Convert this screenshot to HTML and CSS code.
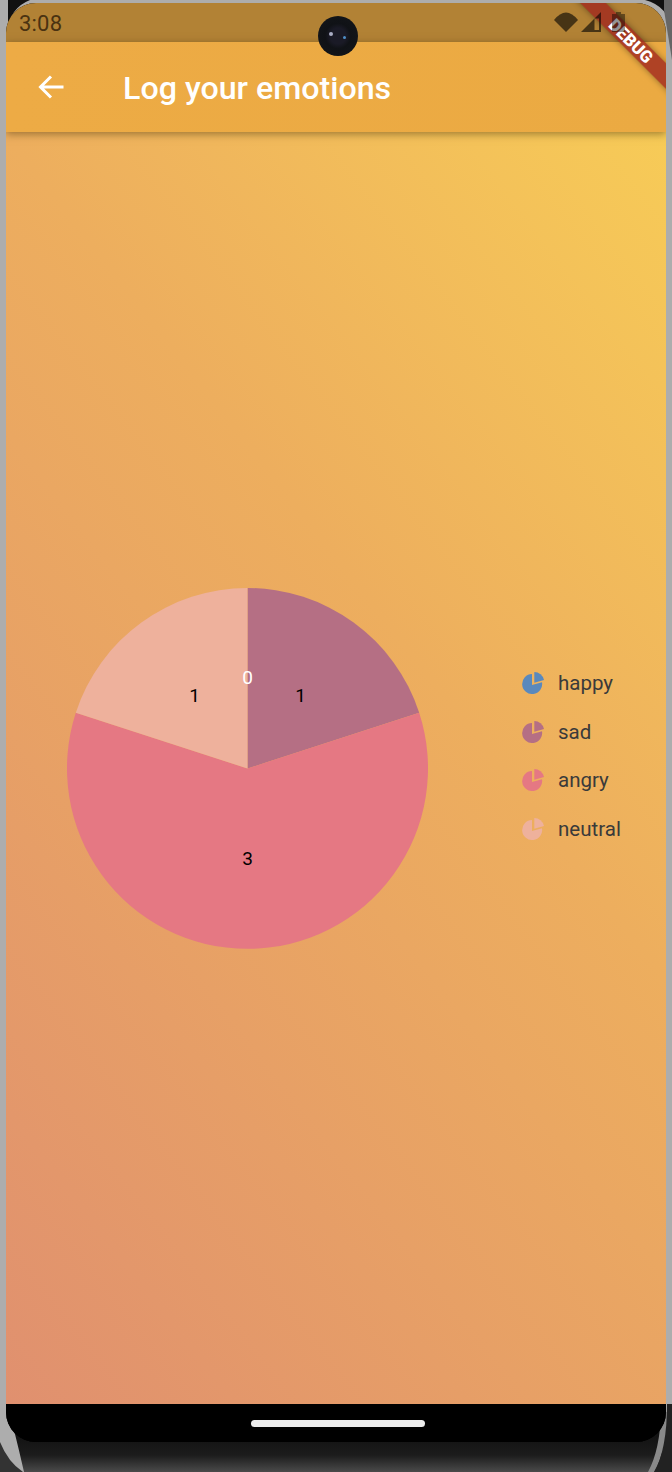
FILE: index.html
```html
<!DOCTYPE html>
<html lang="en">
<head>
    <meta charset="UTF-8">
    <meta name="viewport" content="width=device-width, initial-scale=1.0">
    <title>Log your emotions</title>
    <link rel="stylesheet" href="styles.css">
</head>
<body>
    <div class="device">
        <!-- Phone body behind the screen -->
        <svg class="frame" width="672" height="1472" viewBox="0 0 672 1472">
            <defs>
                <linearGradient id="chin" x1="0" y1="0" x2="0" y2="1">
                    <stop offset="0" stop-color="#0f0f0f"/>
                    <stop offset="0.6" stop-color="#1c1c1c"/>
                    <stop offset="1" stop-color="#4a4a4a"/>
                </linearGradient>
            </defs>
            <rect width="672" height="1472" fill="#adadad"/>
            <path d="M8 30Q10 8 30 0H645Q668 6 672 30V0H8Z" fill="#111"/>
            <path d="M664 0H672V60L664 10Z" fill="#666"/>
            <path d="M14 1430H662V1472H24Q19 1450 14 1430Z" fill="url(#chin)"/>
            <path d="M0 1442Q8 1462 23 1472H0Z" fill="#333"/>
            <path d="M661 1412H667Q667 1450 654 1472H648Q660 1450 661 1412Z" fill="#8a8a8a"/>
            <path d="M667 1404H672V1472H654Q667 1450 667 1404Z" fill="#222"/>
        </svg>

        <div class="screen">
            <div class="status-bar">
                <span class="clock">3:08</span>
                <div class="status-icons">
                    <svg width="24" height="20" viewBox="0 0 24 20"><path class="status-glyph" d="M0 8Q12 -7 24 8L12 20Z"/></svg>
                    <svg width="20" height="20" viewBox="0 0 20 20"><path class="status-glyph" fill-rule="evenodd" d="M20 0V20H0ZM13.500 6.500V18H18V6.500Z"/></svg>
                    <svg class="battery" width="13" height="20" viewBox="0 0 13 20"><path class="status-glyph" d="M4 0H9V2H13V20H0V2H4Z"/></svg>
                </div>
            </div>
            <header class="app-bar">
                <svg class="back" width="26" height="26" viewBox="0 0 26 26">
                    <path d="M25.500 13H3M13 2.500L2.500 13L13 23.500" fill="none" stroke="#fff" stroke-width="3"/>
                </svg>
                <h1>Log your emotions</h1>
            </header>

            <main class="content">
                <svg class="pie" width="361" height="361" viewBox="0 0 361 361">
                    <path d="M180.500 180.500V0A180.500 180.500 0 0 1 352.200 124.700Z" fill="#b56f84"/>
                    <path d="M180.500 180.500L352.200 124.700A180.500 180.500 0 1 1 8.800 124.700Z" fill="#e57883"/>
                    <path d="M180.500 180.500L8.800 124.700A180.500 180.500 0 0 1 180.500 0Z" fill="#eeb19c"/>
                    <text class="pie-label" x="233.500" y="113.500">1</text>
                    <text class="pie-label" x="180.500" y="277">3</text>
                    <text class="pie-label" x="127.500" y="113.500">1</text>
                    <text class="pie-label zero" x="180.500" y="96">0</text>
                </svg>

                <ul class="legend">
                    <li>
                        <svg class="legend-icon happy" viewBox="0 0 22 22"><path d="M10 2V13L20 10.200A10 10 0 1 1 10 2Z"/><path d="M12.300 0A10 10 0 0 1 22 8L12.300 10.800Z"/></svg>
                        happy
                    </li>
                    <li>
                        <svg class="legend-icon sad" viewBox="0 0 22 22"><path d="M10 2V13L20 10.200A10 10 0 1 1 10 2Z"/><path d="M12.300 0A10 10 0 0 1 22 8L12.300 10.800Z"/></svg>
                        sad
                    </li>
                    <li>
                        <svg class="legend-icon angry" viewBox="0 0 22 22"><path d="M10 2V13L20 10.200A10 10 0 1 1 10 2Z"/><path d="M12.300 0A10 10 0 0 1 22 8L12.300 10.800Z"/></svg>
                        angry
                    </li>
                    <li>
                        <svg class="legend-icon neutral" viewBox="0 0 22 22"><path d="M10 2V13L20 10.200A10 10 0 1 1 10 2Z"/><path d="M12.300 0A10 10 0 0 1 22 8L12.300 10.800Z"/></svg>
                        neutral
                    </li>
                </ul>
            </main>

            <div class="nav-bar"><span class="home-pill"></span></div>
            <div class="debug-banner">DEBUG</div>
        </div>

        <div class="camera"><span class="glint"></span><span class="glint blue"></span></div>
    </div>
</body>
</html>
```

FILE: styles.css
```css
body {
    margin: 0;
    font-family: Roboto, "Liberation Sans", sans-serif;
    background-color: #adadad;
}

.device {
    position: relative;
    width: 672px;
    height: 1472px;
    padding: 3px 6px 0;
    box-sizing: border-box;
    overflow: hidden;
}

.frame {
    position: absolute;
    top: 0;
    left: 0;
}

.screen {
    position: relative;
    width: 660px;
    height: 1439px;
    display: flex;
    flex-direction: column;
    overflow: hidden;
    border-radius: 30px;
    background: #000;
}

.status-bar {
    height: 39px;
    flex-shrink: 0;
    display: flex;
    justify-content: space-between;
    align-items: center;
    padding: 1px 41px 0 13px;
    box-sizing: border-box;
    background-color: #b28235;
    color: #4a3211;
}

.clock {
    font-size: 22px;
    letter-spacing: 0.2px;
}

/* system icons sit on top of the debug banner */
.status-icons {
    position: relative;
    z-index: 3;
    display: flex;
    align-items: center;
    gap: 3px;
    margin-top: -2px;
}

.status-glyph {
    fill: rgba(0, 0, 0, 0.6);
}

.battery {
    margin-left: 8px;
}

.battery .status-glyph {
    fill: rgba(0, 0, 0, 0.42);
}

.app-bar {
    position: relative;
    z-index: 1;
    height: 90px;
    flex-shrink: 0;
    display: flex;
    align-items: center;
    gap: 59px;
    padding-left: 32px;
    background: linear-gradient(to right, #edab45, #ebaa42);
    box-shadow: 0 2px 8px rgba(70, 50, 10, 0.5);
}

.app-bar h1 {
    margin: 0;
    padding-top: 2px;
    font-size: 32.2px;
    font-weight: 500;
    color: white;
}

.back {
    flex-shrink: 0;
}

.content {
    flex: 1;
    display: flex;
    align-items: center;
    padding-left: 61px;
    background: linear-gradient(232deg, #f7cb57, #edae5e 40%, #e0906f);
}

.pie {
    flex-shrink: 0;
}

.pie-label {
    font-size: 19px;
    text-anchor: middle;
    fill: #000;
}

.pie-label.zero {
    fill: #fff;
}

.legend {
    list-style: none;
    margin: 0 0 24px 94px;
    padding: 0;
}

.legend li {
    height: 48.67px;
    display: flex;
    align-items: center;
    gap: 14px;
    font-size: 20.5px;
    color: #3a3a3a;
}

.legend-icon {
    width: 22px;
    height: 22px;
}

.happy { fill: #5a89bd; }
.sad { fill: #b56f84; }
.angry { fill: #e57883; }
.neutral { fill: #eeb19c; }

.nav-bar {
    height: 38px;
    flex-shrink: 0;
    display: flex;
    justify-content: center;
    padding: 16px 0 0 4px;
    box-sizing: border-box;
    background-color: #000;
}

.home-pill {
    width: 174px;
    height: 7px;
    border-radius: 4px;
    background-color: #ececec;
}

.debug-banner {
    position: absolute;
    top: 30px;
    left: 526px;
    z-index: 2;
    width: 200px;
    height: 18px;
    padding-right: 3px;
    box-sizing: border-box;
    line-height: 18px;
    text-align: center;
    font-size: 17px;
    font-weight: 900;
    color: white;
    background-color: rgba(160, 40, 30, 0.8);
    box-shadow: 0 0 6px rgba(0, 0, 0, 0.4);
    transform: rotate(45deg);
}

.camera {
    position: absolute;
    top: 16px;
    left: 318px;
    z-index: 3;
    width: 40px;
    height: 40px;
    border-radius: 50%;
    background: radial-gradient(circle at 50% 50%, #1a1a26 0 28%, #101216 45%, #14161a 100%);
}

.glint {
    position: absolute;
    top: 16px;
    left: 11px;
    width: 4px;
    height: 4px;
    border-radius: 50%;
    background-color: #a9adc4;
}

.glint.blue {
    top: 20px;
    left: 25px;
    width: 3px;
    height: 3px;
    background-color: #4f8fc9;
}
```
